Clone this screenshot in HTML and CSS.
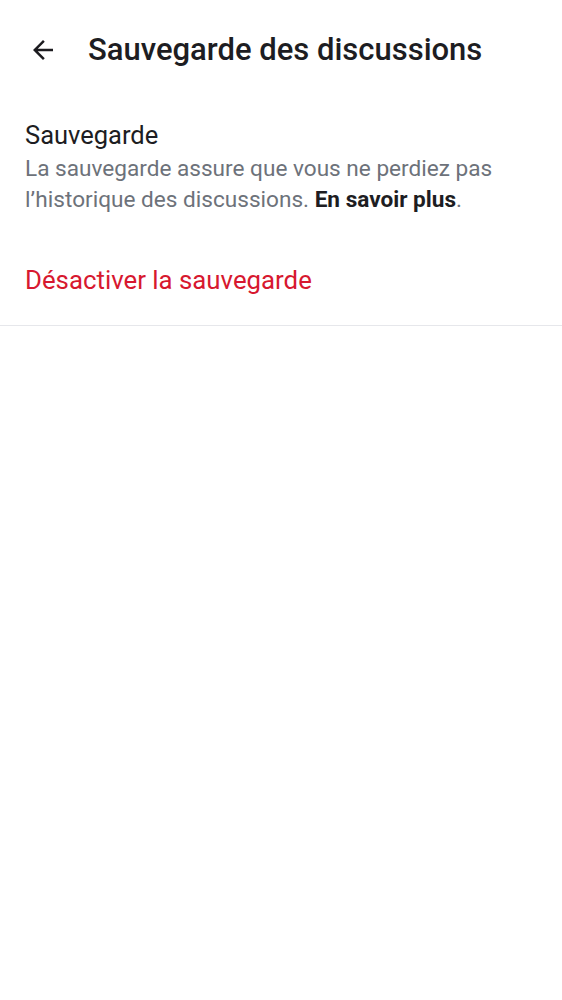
FILE: index.html
```html
<!DOCTYPE html>
<html lang="fr">
<head>
<meta charset="utf-8">
<link rel="stylesheet" href="styles.css">
</head>
<body>
<header class="topbar">
  <button class="back" aria-label="Retour">
    <svg width="30" height="30" viewBox="0 0 24 24"><path d="M20 11H7.83l5.59-5.59L12 4l-8 8 8 8 1.41-1.41L7.83 13H20v-2z" fill="#1c1b1f"/></svg>
  </button>
  <h1 class="title">Sauvegarde des discussions</h1>
</header>
<section class="section">
  <h2 class="label">Sauvegarde</h2>
  <p class="desc">La sauvegarde assure que vous ne perdiez pas l’historique des discussions. <strong>En savoir plus</strong>.</p>
</section>
<div class="action">Désactiver la sauvegarde</div>
</body>
</html>
```
FILE: styles.css
```css
* { box-sizing: border-box; }
body {
  margin: 0;
  background: #fff;
  font-family: Roboto, "Noto Sans", sans-serif;
  color: #1d1d22;
}
.topbar {
  display: flex;
  align-items: center;
  height: 100px;
  padding-left: 27px;
}
.back {
  border: 0;
  background: none;
  padding: 0;
  width: 32px;
  height: 30px;
  display: flex;
  align-items: center;
  justify-content: center;
}
.title {
  margin: 0 0 0 29px;
  font-size: 31px;
  font-weight: 500;
  line-height: 40px;
  color: #1d1d22;
}
.section {
  padding: 19px 25px 0;
}
.label {
  margin: 0;
  font-size: 25.5px;
  font-weight: 400;
  line-height: 32px;
}
.desc {
  margin: 2px 0 0;
  font-size: 22.6px;
  line-height: 31px;
  color: #6d727a;
}
.desc strong { color: #1d1d22; font-weight: 700; }
.action {
  padding: 49px 25px 29px;
  font-size: 25.8px;
  line-height: 32px;
  color: #d7182f;
  border-bottom: 1px solid #e6e7eb;
}
```
